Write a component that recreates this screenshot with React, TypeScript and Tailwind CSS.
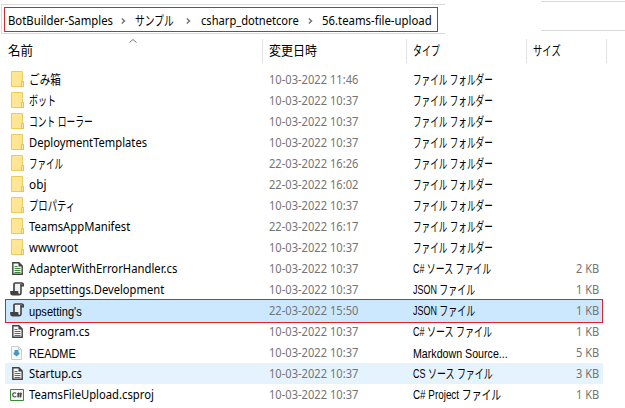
import { useLayoutEffect, useRef, useState } from "react";
import type { ReactNode } from "react";

const latin = "font-['Noto_Sans','Noto_Sans_CJK_JP',sans-serif] text-[12.5px]";
const arial = "font-['Liberation_Sans','Noto_Sans_CJK_JP',sans-serif] text-[13px]";

/* A label that is condensed or widened to fill the given width. */
function Label({ text, width, className = "" }: { text: string; width: number; className?: string }) {
  const ref = useRef<HTMLSpanElement>(null);
  const [scale, setScale] = useState(1);
  useLayoutEffect(() => {
    if (ref.current) setScale(width / ref.current.offsetWidth);
  }, [text, width]);
  return (
    <span className="block h-[20px] shrink-0" style={{ width }}>
      <span
        ref={ref}
        className={`inline-block origin-left whitespace-pre align-top leading-[20px] ${className}`}
        style={{ transform: `scaleX(${scale})` }}
      >
        {text}
      </span>
    </span>
  );
}

function FolderIcon() {
  return (
    <svg width="13" height="17" viewBox="0 0 13 17" className="ml-[5px]">
      <path d="M.5 .5h11v10h1v5H.5z" fill="#ffe594" stroke="#eccb58" />
      <path d="M10.5 15.5V10.5h2v5z" fill="#ffe9a3" stroke="#e3bd43" strokeWidth=".8" />
    </svg>
  );
}

function CodeIcon() {
  return (
    <svg width="11" height="13" viewBox="0 0 11 13" className="ml-[6px]">
      <path d="M.8 .8h6.1L10.2 4v8.2H.8z" fill="#f6f6f6" stroke="#424242" strokeWidth="1.4" />
      <path d="M6.5 .5v4h4z" fill="#424242" />
      <path d="M2.5 4.5h3M2.5 6.5h6M2.5 8.5h6M2.5 10.5h6" stroke="#388a34" />
    </svg>
  );
}

function ScriptIcon() {
  return (
    <svg width="14" height="14" viewBox="0 0 14 14" className="mb-px ml-[4px]">
      <path d="M4 1.5h7v10.2H8.5V9H4z" fill="#f0f0f2" />
      <path d="M4 9.5V2.2Q4 1 5.3 1h6.5Q13.2 1 13.2 2.3V3.6H11" fill="none" stroke="#424242" strokeWidth="1.7" />
      <path d="M11 2v8.5Q11 12.7 9 12.7H2.8Q1 12.7 1 10.8V9.7h6.5v1.4q.1 1 1.3 1.2" fill="none" stroke="#424242" strokeWidth="1.6" />
      <path d="M1 10h6.3v2.5H2.3z" fill="#424242" />
    </svg>
  );
}

function MarkdownIcon() {
  return (
    <svg width="11" height="14" viewBox="0 0 11 14" className="ml-[5px]">
      <path d="M.5 .5h7l3 3v10H.5z" fill="#f8fafc" stroke="#c8ccd0" />
      <path d="M7.5 .5v3h3" fill="none" stroke="#c8ccd0" />
      <path d="M3.5 4h4v2.5h1v1.5L5.5 10.5 2.5 8V6.5h1z" fill="#4599b8" />
    </svg>
  );
}

function ProjectIcon() {
  return (
    <svg width="14" height="12" viewBox="0 0 14 12" className="ml-[4px]">
      <path d="M.5 .5h13v11H.5z" fill="#f5f7f5" stroke="#388a34" />
      <path d="M6 4.4Q5.5 3.7 4.5 3.7 2.7 3.7 2.7 5.8T4.6 8Q5.5 8 6 7.4M8.7 3.5l-.6 5M10.9 3.5l-.6 5M7 4.9h5M6.8 7h5" fill="none" stroke="#424242" strokeWidth="1.1" />
    </svg>
  );
}

const icons: Record<string, ReactNode> = {
  folder: <FolderIcon />,
  code: <CodeIcon />,
  script: <ScriptIcon />,
  markdown: <MarkdownIcon />,
  project: <ProjectIcon />,
};

type Row = {
  icon: string;
  name: string;
  w: number;
  font?: string;
  date: string;
  type?: string;
  tw?: number;
  size?: string;
};

const rows: Row[] = [
  { icon: "folder", name: "ごみ箱", w: 32, font: arial, date: "10-03-2022 11:46" },
  { icon: "folder", name: "ボット", w: 27, font: arial, date: "10-03-2022 10:37" },
  { icon: "folder", name: "コント ローラー", w: 64, font: arial, date: "10-03-2022 10:37" },
  { icon: "folder", name: "DeploymentTemplates", w: 118, date: "10-03-2022 10:37" },
  { icon: "folder", name: "ファイル", w: 34, font: arial, date: "22-03-2022 16:26" },
  { icon: "folder", name: "obj", w: 17, date: "22-03-2022 16:02" },
  { icon: "folder", name: "プロパティ", w: 46, font: arial, date: "10-03-2022 10:37" },
  { icon: "folder", name: "TeamsAppManifest", w: 101, date: "22-03-2022 16:17" },
  { icon: "folder", name: "wwwroot", w: 49, date: "10-03-2022 10:37" },
  { icon: "code", name: "AdapterWithErrorHandler.cs", w: 148, date: "10-03-2022 10:37", type: "C# ソース ファイル", tw: 78, size: "2 KB" },
  { icon: "script", name: "appsettings.Development", w: 135, date: "10-03-2022 10:37", type: "JSON ファイル", tw: 62, size: "1 KB" },
  { icon: "script", name: "upsetting's", w: 53, font: arial, date: "22-03-2022 15:50", type: "JSON ファイル", tw: 62, size: "1 KB" },
  { icon: "code", name: "Program.cs", w: 61, date: "10-03-2022 10:37", type: "C# ソース ファイル", tw: 79, size: "1 KB" },
  { icon: "markdown", name: "README", w: 47, font: arial, date: "10-03-2022 10:37", type: "Markdown Source...", tw: 95, size: "5 KB" },
  { icon: "code", name: "Startup.cs", w: 53, date: "10-03-2022 10:37", type: "CS ソース ファイル", tw: 80, size: "3 KB" },
  { icon: "project", name: "TeamsFileUpload.csproj", w: 125, date: "10-03-2022 10:37", type: "C# Project ファイル", tw: 88, size: "1 KB" },
];

function FileRow({ row, index }: { row: Row; index: number }) {
  const tone =
    index === 11
      ? "-my-[1.5px] h-[24px] border border-[#ed1c24] bg-[#cce8ff]"
      : index === 14
        ? "h-[21px] border-x border-transparent bg-[#e5f3ff]"
        : "h-[21px] border-x border-transparent";
  const namePad = row.icon === "folder" && row.font ? "" : row.font ? "pt-[3px]" : "pt-px";
  return (
    <div className={`flex w-[598px] items-center ${tone}`}>
      <div className="w-[23px] shrink-0">{icons[row.icon]}</div>
      <div className={`w-[240px] shrink-0 text-black ${namePad}`}>
        <Label text={row.name} width={row.w} className={row.font ?? latin} />
      </div>
      <div className="w-[144px] shrink-0 pt-px text-[#747474]">
        <Label text={row.date} width={89} className={latin} />
      </div>
      <div className={`w-[163px] shrink-0 text-black ${index === 13 ? "pt-[3px]" : ""}`}>
        <Label text={row.type ?? "ファイル フォルダー"} width={row.tw ?? 80} className={arial} />
      </div>
      {row.size && (
        <div className="pt-px text-[#747474]">
          <Label text={row.size} width={23} className={latin} />
        </div>
      )}
    </div>
  );
}

function Chevron() {
  return (
    <svg width="5" height="6" viewBox="0 0 5 6" className="shrink-0">
      <path d="M.8 .5L3.5 3 .8 5.5" fill="none" stroke="#777" strokeWidth="1.5" />
    </svg>
  );
}

function Heading({ text, width, className }: { text: string; width: number; className: string }) {
  return (
    <div className={`flex h-6 shrink-0 items-center border-l border-[#e2e2e2] pl-[6px] ${className}`}>
      <Label text={text} width={width} className={arial} />
    </div>
  );
}

export default function App() {
  return (
    <div className="h-[408px] w-[625px] overflow-hidden bg-white text-black">
      <div className="flex h-[39px] items-start justify-between">
        <div className="ml-px mt-1 h-[30px] w-[444px] border-y border-l border-[#d9d9d9] pl-[2px] pt-[2px]">
          <div className="flex h-[25px] w-[434px] items-center border border-[#ed1c24] pl-[3px] pt-[2px]">
            <Label text="BotBuilder-Samples" width={105} className={latin} />
            <div className="flex w-[22px] justify-center pr-px"><Chevron /></div>
            <Label text="サンプル" width={39} className={arial} />
            <div className="flex w-[27px] justify-center pl-[2px]"><Chevron /></div>
            <Label text="csharp_dotnetcore" width={98} className={latin} />
            <div className="flex w-[23px] justify-center"><Chevron /></div>
            <Label text="56.teams-file-upload" width={110} className={latin} />
          </div>
        </div>
        <div className="mt-px h-[30px] w-[84px] border-y border-[#d9d9d9]" />
      </div>
      <div className="flex h-[30px] items-start">
        <div className="flex h-6 w-[262px] shrink-0 items-start pl-[8px]">
          <div className="flex h-6 w-[121px] items-center">
            <Label text="名前" width={25} className={arial} />
          </div>
          <svg width="8" height="4" viewBox="0 0 8 4">
            <path d="M.5 3.5L4 .5l3.5 3" fill="none" stroke="#777" />
          </svg>
        </div>
        <Heading text="変更日時" width={48} className="w-[144px]" />
        <Heading text="タイプ" width={27} className="w-[120px]" />
        <Heading text="サイズ" width={28} className="w-[80px]" />
        <div className="h-6 border-l border-[#e2e2e2]" />
      </div>
      <div className="flex flex-col pl-[5px]">
        {rows.map((row, i) => (
          <FileRow key={row.name} row={row} index={i} />
        ))}
      </div>
    </div>
  );
}
